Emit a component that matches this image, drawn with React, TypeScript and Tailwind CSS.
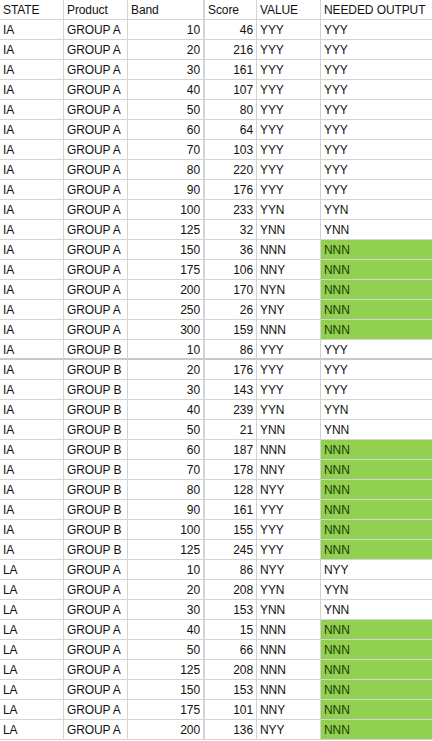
const rows: [string, string, number, number, string, string][] = [
  ["IA", "GROUP A", 10, 46, "YYY", "YYY"],
  ["IA", "GROUP A", 20, 216, "YYY", "YYY"],
  ["IA", "GROUP A", 30, 161, "YYY", "YYY"],
  ["IA", "GROUP A", 40, 107, "YYY", "YYY"],
  ["IA", "GROUP A", 50, 80, "YYY", "YYY"],
  ["IA", "GROUP A", 60, 64, "YYY", "YYY"],
  ["IA", "GROUP A", 70, 103, "YYY", "YYY"],
  ["IA", "GROUP A", 80, 220, "YYY", "YYY"],
  ["IA", "GROUP A", 90, 176, "YYY", "YYY"],
  ["IA", "GROUP A", 100, 233, "YYN", "YYN"],
  ["IA", "GROUP A", 125, 32, "YNN", "YNN"],
  ["IA", "GROUP A", 150, 36, "NNN", "NNN"],
  ["IA", "GROUP A", 175, 106, "NNY", "NNN"],
  ["IA", "GROUP A", 200, 170, "NYN", "NNN"],
  ["IA", "GROUP A", 250, 26, "YNY", "NNN"],
  ["IA", "GROUP A", 300, 159, "NNN", "NNN"],
  ["IA", "GROUP B", 10, 86, "YYY", "YYY"],
  ["IA", "GROUP B", 20, 176, "YYY", "YYY"],
  ["IA", "GROUP B", 30, 143, "YYY", "YYY"],
  ["IA", "GROUP B", 40, 239, "YYN", "YYN"],
  ["IA", "GROUP B", 50, 21, "YNN", "YNN"],
  ["IA", "GROUP B", 60, 187, "NNN", "NNN"],
  ["IA", "GROUP B", 70, 178, "NNY", "NNN"],
  ["IA", "GROUP B", 80, 128, "NYY", "NNN"],
  ["IA", "GROUP B", 90, 161, "YYY", "NNN"],
  ["IA", "GROUP B", 100, 155, "YYY", "NNN"],
  ["IA", "GROUP B", 125, 245, "YYY", "NNN"],
  ["LA", "GROUP A", 10, 86, "NYY", "NYY"],
  ["LA", "GROUP A", 20, 208, "YYN", "YYN"],
  ["LA", "GROUP A", 30, 153, "YNN", "YNN"],
  ["LA", "GROUP A", 40, 15, "NNN", "NNN"],
  ["LA", "GROUP A", 50, 66, "NNN", "NNN"],
  ["LA", "GROUP A", 125, 208, "NNN", "NNN"],
  ["LA", "GROUP A", 150, 153, "NNN", "NNN"],
  ["LA", "GROUP A", 175, 101, "NNY", "NNN"],
  ["LA", "GROUP A", 200, 136, "NYY", "NNN"],
];

// rows after which the sheet shows a thicker divider line
const thick = new Set([16]);

const cell = "h-[20px] border-b border-r border-[#d4d4d4] px-[3px] leading-[20px] whitespace-nowrap overflow-hidden";

function Row({ r, idx }: { r: (typeof rows)[number]; idx: number }) {
  const green = r[5] === "NNN";
  const b = thick.has(idx) ? " border-b-2 border-b-[#c8c8c8]" : "";
  return (
    <>
      <div className={cell + b}>{r[0]}</div>
      <div className={cell + b}>{r[1]}</div>
      <div className={cell + b + " text-right border-r-2"}>{r[2]}</div>
      <div className={cell + b + " text-right"}>{r[3]}</div>
      <div className={cell + b}>{r[4]}</div>
      <div className={cell + b + (green ? " bg-[#92d050] text-[#1d3a08] border-[#92d050]" : "")}>{r[5]}</div>
    </>
  );
}

export default function App() {
  return (
    <div className="w-[433px] h-[741px] bg-white overflow-hidden text-[12px] tracking-[-0.1px] text-[#111]" style={{ fontFamily: '"Liberation Sans", Arial, sans-serif' }}>
      <div className="grid grid-cols-[64px_64px_77px_52px_64px_112px]">
        <div className={cell}>STATE</div>
        <div className={cell}>Product</div>
        <div className={cell + " border-r-2"}>Band</div>
        <div className={cell}>Score</div>
        <div className={cell}>VALUE</div>
        <div className={cell}>NEEDED OUTPUT</div>
        {rows.map((r, i) => (
          <Row key={i} r={r} idx={i} />
        ))}
      </div>
    </div>
  );
}
